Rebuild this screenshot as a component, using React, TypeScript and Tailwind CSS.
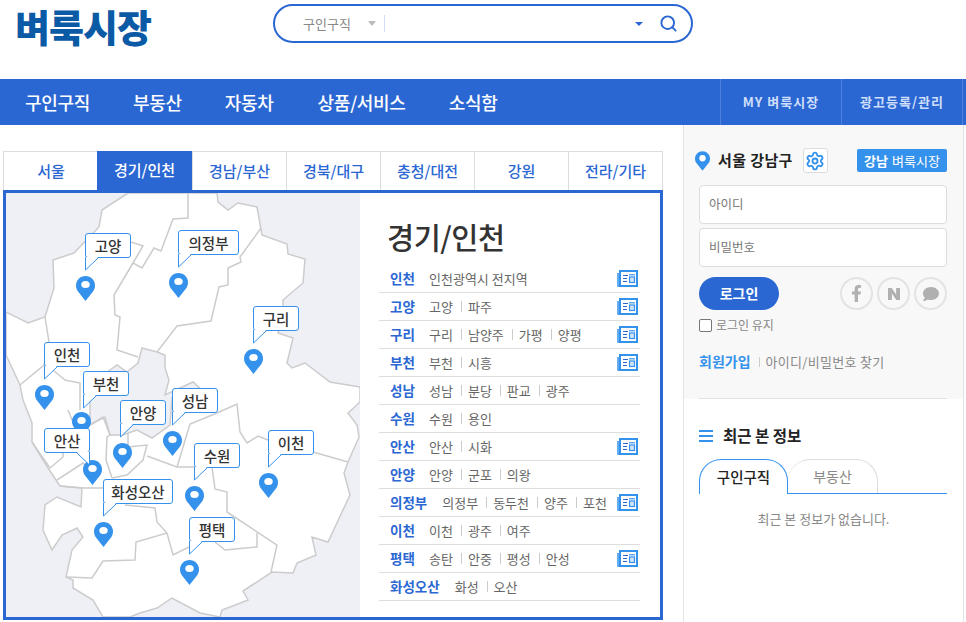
import { Search, Settings } from "lucide-react";
import { FaFacebookF, FaComment } from "react-icons/fa";
import { SiNaver } from "react-icons/si";

const tabs = ["서울", "경기/인천", "경남/부산", "경북/대구", "충청/대전", "강원", "전라/기타"];

const regions: { name: string; items: string[]; news: boolean }[] = [
  { name: "인천", items: ["인천광역시 전지역"], news: true },
  { name: "고양", items: ["고양", "파주"], news: true },
  { name: "구리", items: ["구리", "남양주", "가평", "양평"], news: true },
  { name: "부천", items: ["부천", "시흥"], news: true },
  { name: "성남", items: ["성남", "분당", "판교", "광주"], news: false },
  { name: "수원", items: ["수원", "용인"], news: false },
  { name: "안산", items: ["안산", "시화"], news: true },
  { name: "안양", items: ["안양", "군포", "의왕"], news: false },
  { name: "의정부", items: ["의정부", "동두천", "양주", "포천"], news: true },
  { name: "이천", items: ["이천", "광주", "여주"], news: false },
  { name: "평택", items: ["송탄", "안중", "평성", "안성"], news: true },
  { name: "화성오산", items: ["화성", "오산"], news: false },
];

const pins = [
  [85.5, 301], [178, 298], [253, 374], [44.5, 410], [81, 437], [122, 468],
  [172, 456], [92, 485], [194, 511], [268, 498], [103, 547], [189, 585],
];

const labels: { t: string; x: number; y: number; w: number; right?: boolean }[] = [
  { t: "고양", x: 85, y: 233, w: 46 },
  { t: "의정부", x: 178, y: 230, w: 61 },
  { t: "구리", x: 253, y: 306, w: 46 },
  { t: "인천", x: 44, y: 342, w: 46 },
  { t: "부천", x: 83, y: 371, w: 46 },
  { t: "안양", x: 120, y: 400, w: 46 },
  { t: "성남", x: 172, y: 388, w: 46 },
  { t: "안산", x: 44, y: 428, w: 46, right: true },
  { t: "수원", x: 194, y: 443, w: 46 },
  { t: "이천", x: 268, y: 430, w: 46 },
  { t: "화성오산", x: 103, y: 479, w: 70 },
  { t: "평택", x: 189, y: 517, w: 46 },
];

const land =
  "6,312 6,355 20,385 23,400 32,423 32,442 48,468 60,486 82,488 81,507 57,497 45,505 43,530 52,550 62,535 77,528 83,537 72,550 66,577 73,580 73,588 93,600 103,617 130,617 140,613 157,608 172,598 200,613 220,617 222,610 248,600 243,591 272,572 293,573 297,563 316,555 312,537 328,542 350,495 344,473 348,462 359,437 357,425 348,413 360,402 360,387 330,382 305,363 292,368 287,363 293,338 278,333 283,315 283,300 303,283 305,259 288,254 287,244 262,235 257,207 238,203 228,210 218,202 217,193 128,193 102,210 99,227 74,253 53,260 54,288 45,317 28,323 6,312";

const hole =
  "142,348 157,352 165,355 165,368 169,380 165,395 193,382 207,395 172,398 170,425 152,438 137,430 123,435 110,435 105,417 90,425 90,400 88,385 110,370 117,365 127,372 138,363";

const lines = [
  "188,193 188,218 173,219 161,251 154,248 142,268 133,263 143,246 131,242",
  "133,263 114,295 115,315 120,317 117,350 138,357",
  "45,317 49,342 44,365 20,385",
  "53,370 65,380 80,383 80,410",
  "261,228 240,257 241,262 228,268 228,285 219,287 211,321 177,326 157,352",
  "68,410 73,422 90,440",
  "90,425 103,417 110,435 107,437 106,460 112,478",
  "128,433 128,447 147,445 143,460 127,475 112,478",
  "147,456 177,467 190,424 217,413 237,404 240,432 247,443 258,436 268,440 313,452 348,462",
  "177,467 212,467 215,489 227,492 227,512 277,545 271,572",
  "32,442 50,468 63,457 63,445",
  "57,480 83,463 92,472",
  "60,486 82,488 112,488",
  "125,505 155,508 157,522 167,533 173,555 189,547",
  "215,542 225,550 257,547 257,533",
  "167,533 136,542 135,560 103,561 92,578 66,577",
];

function Pin({ x, y }: { x: number; y: number }) {
  return (
    <svg
      className="absolute"
      style={{ left: x - 6 - 9.5, top: y - 193 - 25 }}
      width="19"
      height="25"
      viewBox="0 0 19 25"
    >
      <path
        d="M9.5 0C4.2 0 0 4.2 0 9.5c0 2.4.9 4.3 2 6L9.5 25 17 15.5c1.1-1.7 2-3.6 2-6C19 4.2 14.8 0 9.5 0z"
        fill="#3592ec"
      />
      <ellipse cx="9.5" cy="8.5" rx="4.2" ry="3.5" fill="#fff" />
    </svg>
  );
}

function Label({ t, x, y, w, right }: { t: string; x: number; y: number; w: number; right?: boolean }) {
  return (
    <div
      className="absolute h-[25px] bg-white border border-[#3592ec] rounded-[3px] flex items-center justify-center text-[14.5px] font-medium text-[#333]"
      style={{ left: x - 6, top: y - 193, width: w }}
    >
      {t}
      <svg
        className="absolute top-[23px]"
        style={right ? { right: -1 } : { left: -1 }}
        width="14"
        height="15"
        viewBox="0 0 14 15"
      >
        {right ? (
          <>
            <path d="M1 0 L13.5 0 L13.5 13 Z" fill="#fff" />
            <path d="M13.5 0 L13.5 13 L1 1" fill="none" stroke="#3592ec" strokeWidth="1" />
          </>
        ) : (
          <>
            <path d="M0.5 0 L13 0 L0.5 13 Z" fill="#fff" />
            <path d="M0.5 0 L0.5 13 L13 1" fill="none" stroke="#3592ec" strokeWidth="1" />
          </>
        )}
      </svg>
    </div>
  );
}

function NewsIcon() {
  return (
    <svg width="21" height="17" viewBox="0 0 21 17" className="ml-auto mr-[2px] shrink-0">
      <path d="M1 3v13h3" fill="none" stroke="#3592ec" strokeWidth="1.5" />
      <rect x="3" y="1" width="17" height="15" fill="#fff" stroke="#3592ec" strokeWidth="2" />
      <path d="M6 5.5h5M6 8.5h4M6 11.5h4" stroke="#2b67d3" strokeWidth="1.2" />
      <rect x="12.5" y="7" width="5" height="5.5" fill="#cfe4fb" stroke="#3592ec" strokeWidth="1.2" />
      <path d="M12 4.8h6" stroke="#3592ec" strokeWidth="1.2" />
    </svg>
  );
}

export default function App() {
  return (
    <div className="w-[966px] h-[622px] overflow-hidden bg-white font-['Noto_Sans_CJK_KR','Noto_Sans',sans-serif] text-[#333]">
      {/* header */}
      <header className="h-[79px] flex items-start">
        <div className="w-[273px] pl-[15px] text-[38px] leading-[52px] font-black tracking-[-1px] text-[#0b5aa5]">
          벼룩시장
        </div>
        <div className="mt-[4px] w-[420px] h-[39px] rounded-full border-2 border-[#2b67d3] flex items-center pl-[28px] pr-[13px]">
          <span className="text-[13px] text-[#888]">구인구직</span>
          <span className="ml-[17px] w-0 h-0 border-x-[4px] border-x-transparent border-t-[5px] border-t-[#bbb]" />
          <span className="ml-[8px] w-px h-[17px] bg-[#cfdcf3]" />
          <span className="ml-auto w-0 h-0 border-x-[4px] border-x-transparent border-t-[4px] border-t-[#2b67d3]" />
          <Search size={19} strokeWidth={2.4} className="ml-[16px] text-[#2b67d3]" />
        </div>
      </header>

      {/* nav */}
      <nav className="h-[46px] bg-[#2b67d3] flex items-center text-white">
        <div className="flex gap-[43px] pl-[25px] text-[18px] font-medium tracking-[-0.3px]">
          <span>구인구직</span>
          <span>부동산</span>
          <span>자동차</span>
          <span className="ml-[1px]">상품/서비스</span>
          <span>소식함</span>
        </div>
        <div className="ml-auto mr-[3px] flex h-full text-[13px] tracking-[1px] font-bold text-[#cfdefa]">
          <div className="w-[121px] flex items-center justify-center border-l border-[#4f82dc]">MY 벼룩시장</div>
          <div className="w-[122px] flex items-center justify-center border-x border-[#4f82dc]">광고등록/관리</div>
        </div>
      </nav>

      {/* body */}
      <div className="flex">
        <main className="w-[660px] ml-[3px] pt-[26px] shrink-0">
          <div className="grid grid-cols-7 h-[39px] border border-b-0 border-[#ddd]">
            {tabs.map((t, i) => (
              <div
                key={t}
                className={
                  i === 1
                    ? "flex items-center justify-center bg-[#2b67d3] text-white text-[15px] font-medium -mt-px -ml-px"
                    : i === 0
                      ? "flex items-center justify-center text-[#2b67d3] text-[15px] font-medium"
                      : "flex items-center justify-center text-[#2b67d3] text-[15px] font-medium border-l border-[#ddd]"
                }
              >
                {t}
              </div>
            ))}
          </div>
          <div className="h-[430px] w-[660px] border-[3px] border-[#2b67d3] flex">
            <div className="relative w-[354px] h-[424px] bg-[#eef0f6] overflow-hidden shrink-0">
              <svg width="354" height="424" viewBox="6 193 354 424" className="block">
                <polygon points={land} fill="#fff" stroke="#ccc" strokeWidth="1.5" />
                <polygon points={hole} fill="#eef0f6" stroke="#ccc" strokeWidth="1.5" />
                {lines.map((p) => (
                  <polyline key={p} points={p} fill="none" stroke="#ccc" strokeWidth="1.5" />
                ))}
              </svg>
              {pins.map(([x, y]) => (
                <Pin key={`${x}-${y}`} x={x} y={y} />
              ))}
              {labels.map((l) => (
                <Label key={l.t} {...l} />
              ))}
            </div>
            <div className="w-[300px] pl-[19px] pr-[20px]">
              <h2 className="pl-[8px] h-[72px] pt-[20px] text-[29.5px] leading-[46px] font-medium text-[#333] tracking-[-0.5px]">
                경기/인천
              </h2>
              <ul>
                {regions.map((r) => (
                  <li key={r.name} className="h-[28px] border-b border-[#ddd] flex items-center pl-[11px] text-[13px] text-[#666]">
                    <span className="min-w-[39px] text-[13.5px] font-bold text-[#2b67d3]">
                      <span className={r.name.length > 2 ? "mr-[15px]" : ""}>{r.name}</span>
                    </span>
                    {r.items.map((it, i) => (
                      <span key={it} className="flex items-center">
                        {i > 0 && <span className="w-px h-[11px] bg-[#ccc] ml-[8px] mr-[6px]" />}
                        {it}
                      </span>
                    ))}
                    {r.news && <NewsIcon />}
                  </li>
                ))}
              </ul>
            </div>
          </div>
        </main>

        {/* sidebar */}
        <aside className="ml-[20px] w-[281px] h-[520px] border-x border-[#e3e3e3] shrink-0">
          <div className="h-[274px] bg-[#f8f8f8] pl-[15px] pr-[16px] relative">
            <div className="flex items-center h-[25px] mt-[23px] absolute top-0 left-[11px] right-[16px]">
              <svg width="15" height="20" viewBox="0 0 19 25">
                <path
                  d="M9.5 0C4.2 0 0 4.2 0 9.5c0 2.4.9 4.3 2 6L9.5 25 17 15.5c1.1-1.7 2-3.6 2-6C19 4.2 14.8 0 9.5 0z"
                  fill="#3592ec"
                />
                <ellipse cx="9.5" cy="9" rx="4" ry="4" fill="#fff" />
              </svg>
              <span className="ml-[8px] text-[15px] font-bold text-[#222] tracking-[0.4px] whitespace-nowrap">서울 강남구</span>
              <span className="ml-[10px] w-[25px] h-[25px] bg-white border border-[#ddd] rounded-[3px] flex items-center justify-center">
                <Settings size={20} strokeWidth={2.2} className="text-[#3592ec]" />
              </span>
              <span className="ml-auto w-[90px] h-[23px] rounded-[2px] bg-[#3592ec] text-white text-[13px] flex items-center justify-center">
                <b className="font-bold mr-[4px]">강남</b>벼룩시장
              </span>
            </div>
            <div className="pt-[60px] flex flex-col gap-[4px]">
              <div className="h-[39px] bg-white border border-[#ddd] rounded-[4px] flex items-center pl-[9px] text-[12.5px] text-[#777]">아이디</div>
              <div className="h-[39px] bg-white border border-[#ddd] rounded-[4px] flex items-center pl-[9px] text-[12.5px] text-[#777]">비밀번호</div>
            </div>
            <div className="mt-[10px] flex items-center">
              <div className="w-[80px] h-[33px] rounded-full bg-[#2b67d3] text-white text-[14px] font-bold flex items-center justify-center">로그인</div>
              <div className="ml-auto flex gap-[4px] text-[#b0b0b0]">
                <span className="w-[33px] h-[33px] rounded-full border-2 border-[#e3e3e3] flex items-center justify-center"><FaFacebookF size={17} /></span>
                <span className="w-[33px] h-[33px] rounded-full border-2 border-[#e3e3e3] flex items-center justify-center"><SiNaver size={12} /></span>
                <span className="w-[33px] h-[33px] rounded-full border-2 border-[#e3e3e3] flex items-center justify-center"><FaComment size={16} /></span>
              </div>
            </div>
            <div className="mt-[6px] flex items-center text-[12px] text-[#888]">
              <span className="w-[13px] h-[13px] bg-white border border-[#767676] rounded-[2px]" />
              <span className="ml-[4px]">로그인 유지</span>
            </div>
            <div className="mt-[17px] flex items-center text-[13px] tracking-[0.3px] text-[#888]">
              <span className="font-bold text-[14px] text-[#3592ec] tracking-normal">회원가입</span>
              <span className="w-px h-[10px] bg-[#ccc] ml-[8px] mr-[6px]" />
              <span>아이디/비밀번호 찾기</span>
            </div>
            <div className="absolute bottom-0 left-[15px] right-[16px] h-px bg-[#e3e3e3]" />
          </div>
          <div className="px-[15px]">
            <div className="mt-[26px] flex items-center h-[22px]">
              <span className="flex flex-col gap-[2.5px]">
                <span className="block w-[14px] h-[2.5px] bg-[#3592ec]" />
                <span className="block w-[14px] h-[2.5px] bg-[#3592ec]" />
                <span className="block w-[14px] h-[2.5px] bg-[#3592ec]" />
              </span>
              <span className="ml-[10px] text-[15.5px] font-bold text-[#222]">최근 본 정보</span>
            </div>
            <div className="mt-[12px] flex h-[35px] border-b border-[#3592ec] w-[248px]">
              <div className="w-[89px] h-[35px] border border-b-0 border-[#3592ec] rounded-t-[22px] bg-white flex items-center justify-center text-[14.5px] font-medium text-[#222]">구인구직</div>
              <div className="w-[90px] h-[34px] border border-l-0 border-b-0 border-[#ddd] rounded-t-[22px] flex items-center justify-center text-[14px] text-[#888]">부동산</div>
            </div>
            <div className="mt-[15px] text-center text-[13px] text-[#888]">최근 본 정보가 없습니다.</div>
          </div>
        </aside>
      </div>
    </div>
  );
}
